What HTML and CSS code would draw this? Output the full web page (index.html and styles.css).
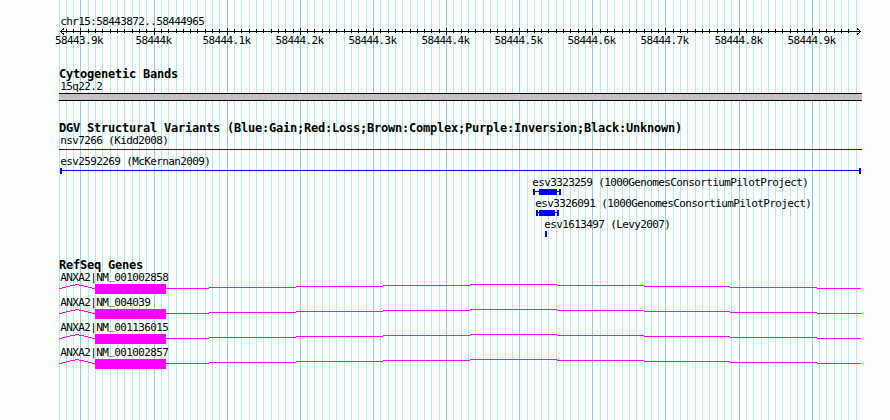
FILE: index.html
```html
<!DOCTYPE html>
<html lang="en">
<head>
  <meta charset="UTF-8">
  <title>chr15:58443872..58444965</title>
  <link rel="stylesheet" href="styles.css">
</head>
<body>
  <div class="browser">
    <!-- Grid behind all tracks -->
    <svg class="grid" width="890" height="420">
      <path class="grid-minor" id="grid-minor"/>
      <path class="grid-major" id="grid-major"/>
    </svg>

    <!-- Ruler -->
    <header class="ruler">
      <p class="label">chr15:58443872..58444965</p>
      <svg class="axis" id="axis" width="890" height="20">
        <path class="tick" id="ticks"/>
        <rect x="60" y="3" width="801" height="1"/>
        <path class="arrow" d="M64 0.5L60.5 3.5L64 6.5M857 0.5L860.5 3.5L857 6.5"/>
      </svg>
    </header>

    <!-- Cytogenetic Bands -->
    <section class="track bands">
      <h2>Cytogenetic Bands</h2>
      <p class="label">15q22.2</p>
      <div class="band"></div>
    </section>

    <!-- Structural Variants -->
    <section class="track variants">
      <h2>DGV Structural Variants (Blue:Gain;Red:Loss;Brown:Complex;Purple:Inversion;Black:Unknown)</h2>
      <div class="feature inversion">
        <p class="label">nsv7266 (Kidd2008)</p>
        <svg width="890" height="6"><rect x="59" y="2" width="803" height="1"/></svg>
      </div>
      <div class="feature gain">
        <p class="label">esv2592269 (McKernan2009)</p>
        <svg width="890" height="6"><path d="M60 0h2v6h-2zM60 2h801v1h-801zM859 0h2v6h-2z"/></svg>
      </div>
      <div class="feature gain">
        <p class="label esv3323259">esv3323259 (1000GenomesConsortiumPilotProject)</p>
        <svg width="890" height="6"><path d="M533 0h2v6h-2zM533 2h28v1h-28zM539 0h18v6h-18zM559 0h2v6h-2z"/></svg>
      </div>
      <div class="feature gain">
        <p class="label esv3326091">esv3326091 (1000GenomesConsortiumPilotProject)</p>
        <svg width="890" height="6"><path d="M536 0h2v6h-2zM536 2h23v1h-23zM539 0h16v6h-16zM557 0h2v6h-2z"/></svg>
      </div>
      <div class="feature gain">
        <p class="label esv1613497">esv1613497 (Levy2007)</p>
        <svg width="890" height="6"><rect x="545" y="0" width="2" height="6"/></svg>
      </div>
    </section>

    <!-- RefSeq Genes -->
    <section class="track genes">
      <h2>RefSeq Genes</h2>
      <div class="feature gene">
        <p class="label">ANXA2|NM<span class="underscore">_</span>001002858</p>
        <svg width="890" height="10">
          <g id="transcript">
            <path class="intron" d="M59 4.5h3M62 3.5h4M66 2.5h4M70 1.5h5M75 .5h4M79 1.5h5M84 2.5h4M88 3.5h4M92 4.5h3"/>
            <rect x="95" y="0" width="71" height="10"/>
            <path class="intron" d="M166 4.5h43M209 3.5h87M296 2.5h87M383 1.5h87M470 .5h87M557 1.5h87M644 2.5h86M730 3.5h87M817 4.5h44"/>
          </g>
        </svg>
      </div>
      <div class="feature gene">
        <p class="label">ANXA2|NM<span class="underscore">_</span>004039</p>
        <svg width="890" height="10"><use href="#transcript"/></svg>
      </div>
      <div class="feature gene">
        <p class="label">ANXA2|NM<span class="underscore">_</span>001136015</p>
        <svg width="890" height="10"><use href="#transcript"/></svg>
      </div>
      <div class="feature gene">
        <p class="label">ANXA2|NM<span class="underscore">_</span>001002857</p>
        <svg width="890" height="10"><use href="#transcript"/></svg>
      </div>
    </section>
  </div>
  <script src="script.js"></script>
</body>
</html>
```
FILE: styles.css
```css
/* General Styles */
body {
  margin: 0;
  background-color: #fdfffc;
  color: #000;
  font-family: "DejaVu Sans Mono", monospace;
}

.browser {
  position: relative;
  width: 890px;
  height: 420px;
  overflow: hidden;
}

svg {
  display: block;
  shape-rendering: crispEdges;
}

/* Grid */
.grid {
  position: absolute;
  top: 0;
  left: 0;
  z-index: -1;
}

.grid-minor {
  stroke: #afeeee;
}

.grid-major {
  stroke: #87ceeb;
}

/* Text */
h2 {
  margin: 0;
  padding-left: 59px;
  font-size: 12px;
  line-height: 12px;
  letter-spacing: -0.224px; /* 7px cells */
  white-space: nowrap;
}

.label {
  margin: 0;
  padding-left: 60.2px;
  font-size: 11px;
  line-height: 13px;
  letter-spacing: -0.622px; /* 6px cells */
  white-space: nowrap;
}

/* Raised so it clears the exon below */
.underscore {
  line-height: 0;
  vertical-align: 2px;
}

/* Ruler */
.ruler {
  padding-top: 15px;
}

.axis {
  overflow: visible;
}

.axis text {
  font-size: 11px;
  letter-spacing: -0.622px;
}

.tick {
  stroke: #000;
}

.arrow {
  fill: none;
  stroke: #000;
}

/* Tracks */
.bands {
  padding-top: 20px;
}

.band {
  box-sizing: border-box;
  width: 803px;
  height: 8px;
  margin-left: 59px;
  background-color: #c4c0c4;
  border-top: 1px solid #000;
  border-bottom: 1px solid #000;
}

.variants {
  padding-top: 21px;
}

.genes {
  padding-top: 20px;
}

.feature {
  padding-bottom: 2px;
}

.inversion svg {
  fill: #4b0082;
}

.gain svg {
  fill: #0000ff;
}

.gene svg {
  fill: #ff00ff;
}

.intron {
  stroke: #ff00ff;
}

/* Labels start at the left end of the feature */
.esv3323259 {
  padding-left: 532.2px;
}

.esv3326091 {
  padding-left: 535.2px;
}

.esv1613497 {
  padding-left: 544.2px;
}
```
FILE: script.js
```js
// 10 bp per step, major line every 100 bp starting at 58443.9k
var STEP = 7.3126;
var FIRST = 80.95;
var minor = "";
var major = "";
var ticks = "";
var axis = document.getElementById("axis");

for (var n = -3; n <= 106; n++) {
  var x = Math.floor(FIRST + n * STEP);
  var mid = x + 0.5;
  if (n % 10 === 0) {
    major += "M" + mid + " 0V420";
    ticks += "M" + mid + " 0V7";
    addLabel(x, n / 10);
  } else {
    minor += "M" + mid + " 0V420";
    if (n > -3 && n < 106) {
      ticks += "M" + mid + " 1V5";
    }
  }
}

function addLabel(x, i) {
  var label = (584439 + i) / 10 + "k";
  var text = document.createElementNS("http://www.w3.org/2000/svg", "text");
  text.setAttribute("x", x - label.length * 3 - (i === 0 ? 1 : 0.4));
  text.setAttribute("y", 16);
  text.textContent = label;
  axis.appendChild(text);
}

document.getElementById("grid-minor").setAttribute("d", minor);
document.getElementById("grid-major").setAttribute("d", major);
document.getElementById("ticks").setAttribute("d", ticks);
```
